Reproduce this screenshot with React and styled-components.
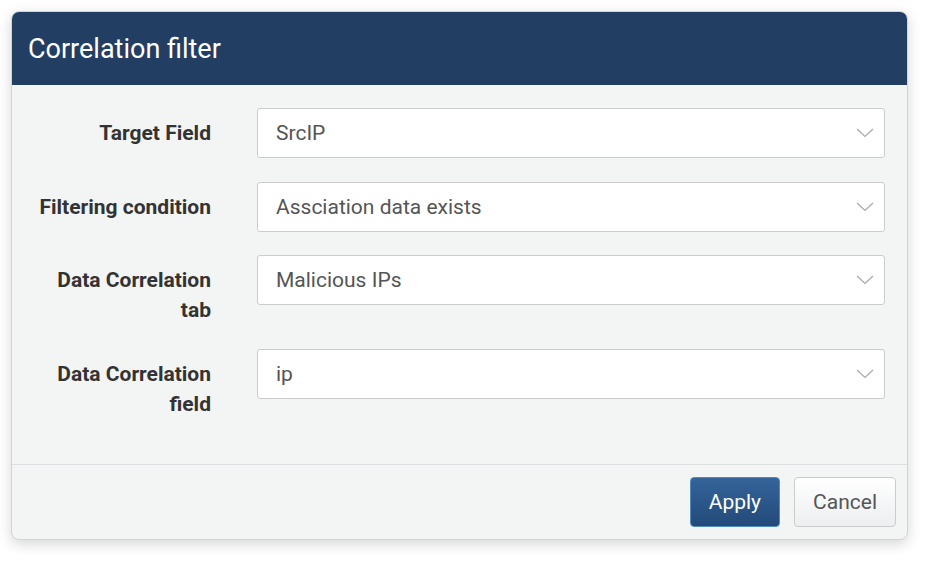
import React from "react"
import styled, { createGlobalStyle } from "styled-components"

const GlobalStyle = createGlobalStyle`
  html, body {
    margin: 0;
    padding: 0;
    background: #ffffff;
    font-family: Roboto, "Liberation Sans", Arial, sans-serif;
  }
`

const Page = styled.div`
  padding: 11px 23px 23px 11px;
`

const Dialog = styled.div`
  width: 897px;
  border: 1px solid #d2d4d6;
  border-radius: 8px;
  background: #f3f4f4;
  box-shadow: 0 4px 14px rgba(0, 0, 0, 0.16);
  overflow: hidden;
  box-sizing: border-box;
`

const Header = styled.div`
  height: 73px;
  background: #223f63;
  color: #ffffff;
  display: flex;
  align-items: center;
  padding: 0 16px;
  font-size: 27px;
  font-weight: 400;
`

const Body = styled.div`
  padding: 23px 22px 45px 0;
  display: flex;
  flex-direction: column;
  gap: 23.5px;
  border-bottom: 1px solid #dcdedf;
`

const Row = styled.div`
  display: flex;
  align-items: flex-start;
`

const Label = styled.div`
  width: 180px;
  flex-shrink: 0;
  margin-left: 19px;
  margin-right: 46px;
  padding-top: 10px;
  text-align: right;
  font-size: 21px;
  font-weight: 700;
  line-height: 30px;
  color: #333333;
`

const Select = styled.div`
  flex: 1;
  height: 50px;
  box-sizing: border-box;
  background: #ffffff;
  border: 1px solid #cccccc;
  border-radius: 3px;
  display: flex;
  align-items: center;
  justify-content: space-between;
  padding: 0 10px 0 18px;
  font-size: 21px;
  color: #555555;
`

const Chevron = () => (
  <svg width="18" height="10" viewBox="0 0 18 10" fill="none">
    <path d="M1 1 L9 8.5 L17 1" stroke="#a8a8a8" strokeWidth="1.2" />
  </svg>
)

const Footer = styled.div`
  height: 74px;
  display: flex;
  align-items: center;
  justify-content: flex-end;
  gap: 14px;
  padding: 0 11px;
`

const Button = styled.button`
  height: 50px;
  box-sizing: border-box;
  border-radius: 4px;
  font-family: inherit;
  font-size: 21px;
  padding: 0 18px;
  cursor: pointer;
  border: 1px solid ${(p) => (p.$primary ? "#4f8cc0" : "#cccccc")};
  color: ${(p) => (p.$primary ? "#ffffff" : "#555555")};
  background: ${(p) =>
    p.$primary
      ? "linear-gradient(#35649a, #234a7a)"
      : "linear-gradient(#ffffff, #eceef0)"};
`

const fields = [
  { label: "Target Field", value: "SrcIP" },
  { label: "Filtering condition", value: "Assciation data exists" },
  { label: "Data Correlation tab", value: "Malicious IPs" },
  { label: "Data Correlation field", value: "ip" },
]

const App = () => (
  <Page>
    <GlobalStyle />
    <Dialog>
      <Header>Correlation filter</Header>
      <Body>
        {fields.map((f) => (
          <Row key={f.label}>
            <Label>{f.label}</Label>
            <Select>
              {f.value}
              <Chevron />
            </Select>
          </Row>
        ))}
      </Body>
      <Footer>
        <Button $primary>Apply</Button>
        <Button>Cancel</Button>
      </Footer>
    </Dialog>
  </Page>
)

export default App
